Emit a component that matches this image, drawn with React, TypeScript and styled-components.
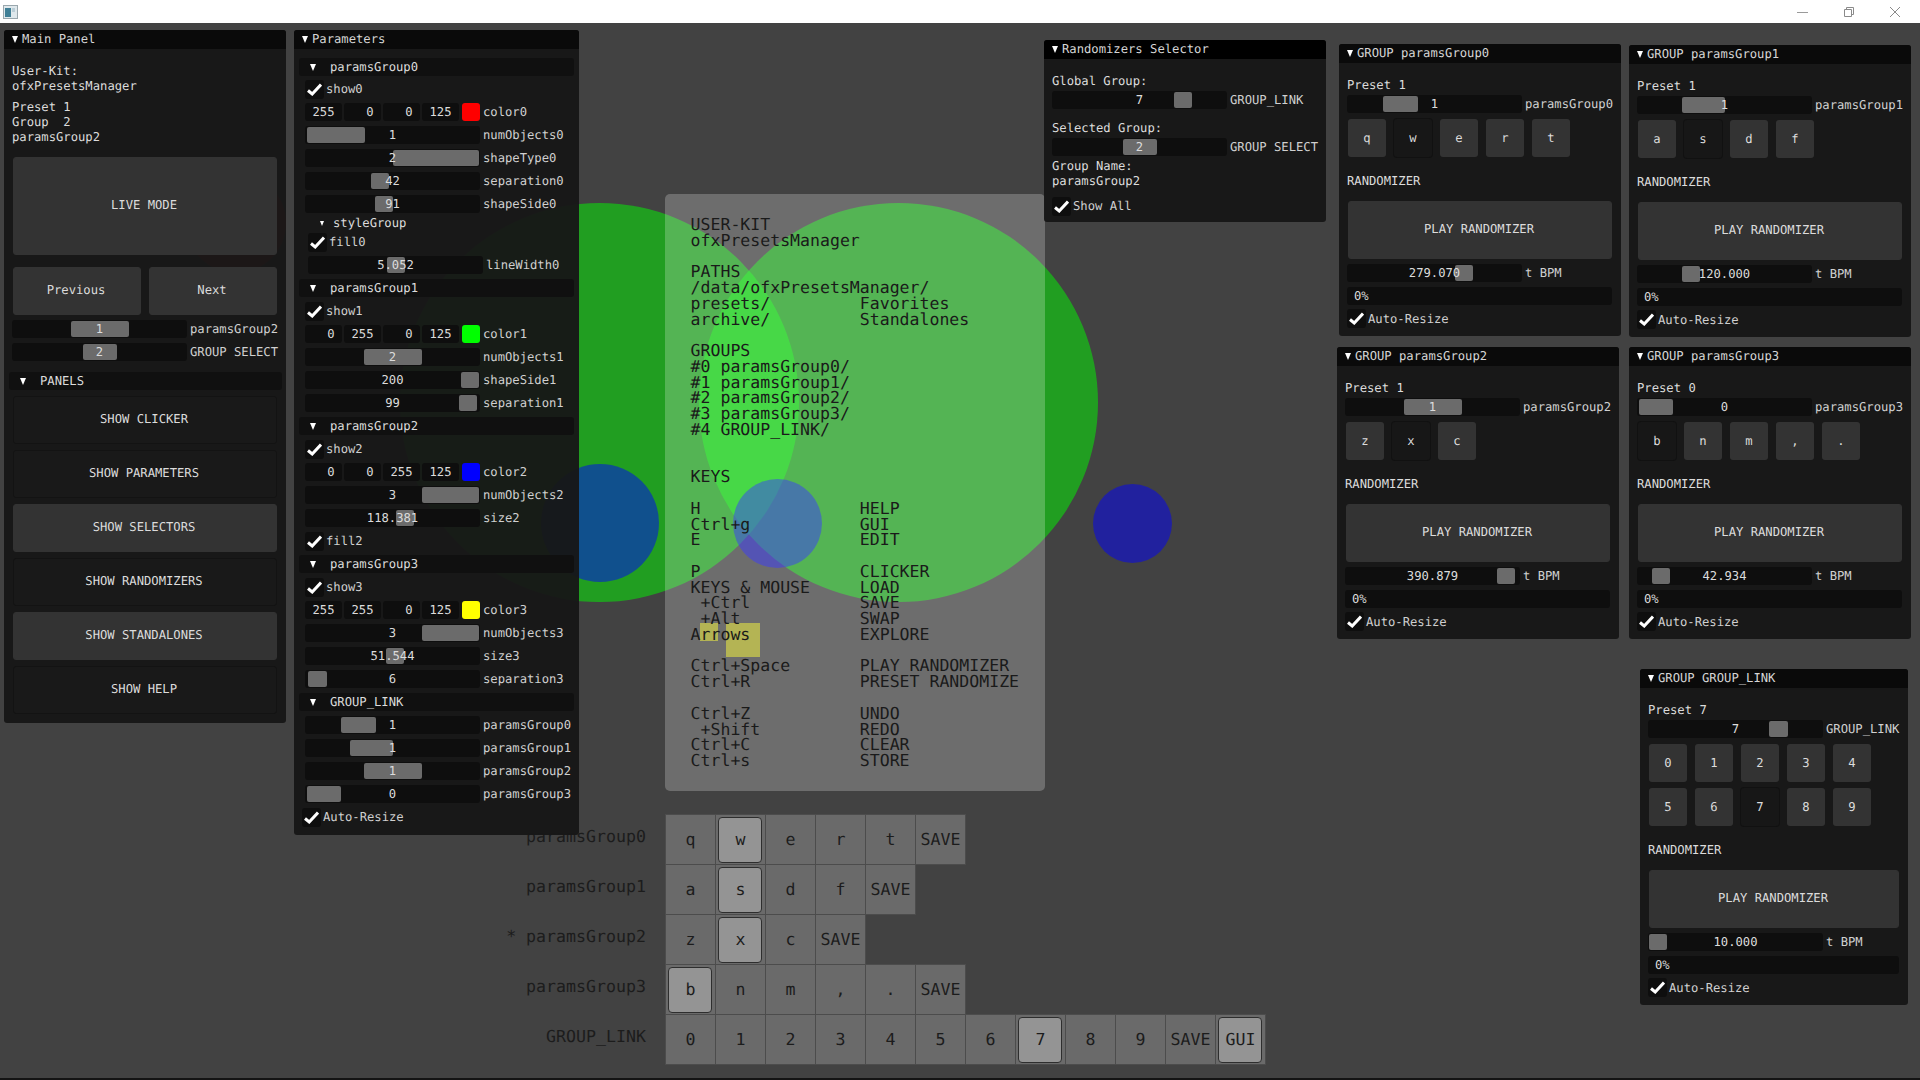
import React from 'react';
import styled, { createGlobalStyle } from 'styled-components';

const GlobalStyle = createGlobalStyle`
  html, body {
    margin: 0;
    padding: 0;
    background: #424242;
  }
  * {
    box-sizing: border-box;
  }
`;

const MONO = `"DejaVu Sans Mono", "Liberation Mono", monospace`;

/* ---------- frame ---------- */

const Frame = styled.div`
  position: relative;
  width: 1920px;
  height: 1080px;
  overflow: hidden;
  background: #424242;
  display: flex;
  flex-direction: column;
  font-family: ${MONO};
  font-size: 12.2px;
  color: #dcdcdc;
  text-rendering: geometricPrecision;
`;

const OsBar = styled.div`
  height: 23px;
  background: #ffffff;
  display: flex;
  align-items: center;
  justify-content: space-between;
  padding: 0 20px 0 3px;
`;

const OsControls = styled.div`
  display: flex;
  align-items: center;
  gap: 36px;
`;

const FrameFill = styled.div`
  flex: 1;
`;

const BottomEdge = styled.div`
  height: 2px;
  background: #141414;
`;

/* ---------- scene drawn behind the gui ---------- */

const Circle = styled.div<{ $x: number; $y: number; $d: number; $color: string }>`
  position: absolute;
  left: ${(p) => p.$x - p.$d / 2}px;
  top: ${(p) => p.$y - p.$d / 2}px;
  width: ${(p) => p.$d}px;
  height: ${(p) => p.$d}px;
  border-radius: 50%;
  background: ${(p) => p.$color};
`;

const Square = styled.div<{ $x: number; $y: number; $d: number }>`
  position: absolute;
  left: ${(p) => p.$x}px;
  top: ${(p) => p.$y}px;
  width: ${(p) => p.$d}px;
  height: ${(p) => p.$d}px;
  background: rgba(255, 255, 0, 0.49);
`;

const HelpPanel = styled.pre`
  position: absolute;
  left: 665px;
  top: 194px;
  width: 380px;
  height: 597px;
  margin: 0;
  padding: 23px 0 0 25.6px;
  border-radius: 5px;
  background: rgba(255, 255, 255, 0.233);
  font-family: ${MONO};
  font-size: 16.55px;
  line-height: 15.77px;
  color: #1a1a1a;
`;

/* ---------- clicker ---------- */

const Clicker = styled.div`
  position: absolute;
  left: 500px;
  top: 814px;
  display: flex;
  flex-direction: column;
`;

const ClickRow = styled.div`
  display: flex;
  align-items: center;
  height: 50px;
`;

const ClickLabel = styled.div`
  width: 146px;
  margin-right: 19px;
  padding-bottom: 5px;
  text-align: right;
  font-size: 16.6px;
  color: #1c1c1c;
  white-space: pre;
`;

const ClickKey = styled.div<{ $active?: boolean }>`
  position: relative;
  width: 51px;
  height: 51px;
  margin-right: -1px;
  flex: none;
  display: flex;
  align-items: center;
  justify-content: center;
  background: #6a6a6a;
  border: 1px solid #4c4c4c;
  font-size: 16.6px;
  color: #1c1c1c;

  &::before {
    content: '';
    display: ${(p) => (p.$active ? 'block' : 'none')};
    position: absolute;
    inset: 2px 3px 1px 2px;
    background: #949494;
    border: 1px solid #2e2e2e;
    border-radius: 4px;
  }
`;

const ClickKeyText = styled.span`
  position: relative;
`;

/* ---------- imgui-like windows ---------- */

const Win = styled.div<{ $x: number; $y: number; $w: number }>`
  position: absolute;
  left: ${(p) => p.$x}px;
  top: ${(p) => p.$y}px;
  width: ${(p) => p.$w}px;
  border-radius: 3px;
  background: rgba(23, 23, 23, 0.96);
  overflow: hidden;
`;

const TitleBar = styled.div<{ $dark?: boolean }>`
  height: 19px;
  padding: 0 0 1px 8px;
  display: flex;
  align-items: center;
  gap: 4px;
  background: ${(p) => (p.$dark ? '#000000' : '#0a0a0a')};
  color: #d6d6d6;
  white-space: pre;
`;

const Arrow = styled.span<{ $small?: boolean }>`
  flex: none;
  width: 0;
  height: 0;
  border-left: ${(p) => (p.$small ? 2.5 : 3.5)}px solid transparent;
  border-right: ${(p) => (p.$small ? 2.5 : 3.5)}px solid transparent;
  border-top: ${(p) => (p.$small ? 5 : 7)}px solid #ffffff;
`;

const Body = styled.div<{ $pad?: number; $bottom?: number }>`
  display: flex;
  flex-direction: column;
  padding: 0 ${(p) => p.$pad ?? 8}px ${(p) => p.$bottom ?? 9}px;
`;

const Line = styled.div<{ $mt?: number }>`
  height: 15px;
  line-height: 15px;
  margin-top: ${(p) => p.$mt ?? 0}px;
  white-space: pre;
`;

const SectionHeader = styled.div<{ $mt?: number }>`
  height: 18px;
  margin-top: ${(p) => p.$mt ?? 5}px;
  padding-left: 11px;
  display: flex;
  align-items: center;
  gap: 14px;
  border-radius: 3px;
  background: #101010;
`;

const PanelsHeader = styled(SectionHeader)`
  margin-left: -3px;
  margin-right: -4px;
  padding-left: 11px;
`;

const BigButton = styled.div<{ $h: number; $mt: number; $off?: boolean }>`
  height: ${(p) => p.$h}px;
  margin: ${(p) => p.$mt}px 1px 0;
  padding: 0 2px 2px 0;
  display: flex;
  align-items: center;
  justify-content: center;
  border-radius: 3px;
  background: ${(p) => (p.$off ? '#191919' : '#333333')};
  border: 1px solid ${(p) => (p.$off ? '#131313' : '#333333')};
`;

const SplitRow = styled.div`
  display: grid;
  grid-template-columns: 1fr 1fr;
  gap: 8px;
  margin: 12px 1px 0;
`;

const SplitButton = styled(BigButton)`
  margin: 0;
`;

const Row = styled.div<{ $mt?: number; $ml?: number }>`
  display: flex;
  align-items: center;
  gap: 3px;
  height: 18px;
  margin-top: ${(p) => p.$mt ?? 5}px;
  margin-left: ${(p) => p.$ml ?? 0}px;
  white-space: pre;
`;

const Track = styled.div`
  position: relative;
  flex: none;
  width: 175px;
  height: 18px;
  display: flex;
  align-items: center;
  justify-content: center;
  border-radius: 3px;
  background: #0e0e0e;
`;

const Grab = styled.div`
  position: absolute;
  top: 1px;
  bottom: 1px;
  border-radius: 2px;
  background: #6b6b6b;
`;

const TrackValue = styled.span`
  position: relative;
`;

const RowLabel = styled.span`
  color: #d0d0d0;
`;

const CheckRow = styled(Row)`
  gap: 2px;
`;

const CheckBox = styled.span`
  flex: none;
  width: 19px;
  height: 19px;
  display: flex;
  align-items: center;
  justify-content: center;
  border-radius: 3px;
  background: #0e0e0e;
`;

const Channel = styled.div`
  flex: none;
  width: 37px;
  height: 18px;
  display: flex;
  align-items: center;
  justify-content: center;
  border-radius: 3px;
  background: #0e0e0e;
`;

const ChannelGroup = styled.div`
  display: flex;
  gap: 2px;
`;

const Swatch = styled.span<{ $color: string }>`
  flex: none;
  width: 18px;
  height: 18px;
  border-radius: 3px;
  background: ${(p) => p.$color};
`;

const SubHeader = styled.div`
  height: 16px;
  margin: 2px 0 0 21px;
  display: flex;
  align-items: center;
  gap: 9px;
`;

const KeyGrid = styled.div`
  display: grid;
  grid-template-columns: repeat(5, 38px);
  gap: 6px 8px;
  margin: 6px 0 0 1px;
`;

const KeyButton = styled.div<{ $active?: boolean }>`
  height: 38px;
  display: flex;
  align-items: center;
  justify-content: center;
  border-radius: 3px;
  background: ${(p) => (p.$active ? '#171717' : '#333333')};
  box-shadow: ${(p) => (p.$active ? '0 0 0 1px #111111' : 'none')};
`;

const Progress = styled.div`
  height: 18px;
  margin: 5px 1px 0 0;
  padding-left: 7px;
  display: flex;
  align-items: center;
  border-radius: 3px;
  background: #0e0e0e;
`;

/* ---------- small widgets ---------- */

const Check = () => (
  <svg width="15" height="13" viewBox="0 0 15 13">
    <path d="M1 7.5 L5.2 11 L14 1.5" fill="none" stroke="#ffffff" strokeWidth="3" />
  </svg>
);

const CheckItem: React.FC<{ label: string; mt?: number; ml?: number }> = ({ label, mt, ml }) => (
  <CheckRow $mt={mt} $ml={ml}>
    <CheckBox>
      <Check />
    </CheckBox>
    <RowLabel>{label}</RowLabel>
  </CheckRow>
);

interface SliderProps {
  value: string;
  label: string;
  left: number;
  width: number;
  mt?: number;
  ml?: number;
}

const Slider: React.FC<SliderProps> = ({ value, label, left, width, mt, ml }) => (
  <Row $mt={mt} $ml={ml}>
    <Track>
      <Grab style={{ left, width }} />
      <TrackValue>{value}</TrackValue>
    </Track>
    <RowLabel>{label}</RowLabel>
  </Row>
);

const ColorRow: React.FC<{ values: string[]; color: string; label: string }> = ({ values, color, label }) => (
  <Row $ml={6}>
    <ChannelGroup>
      {values.map((v, i) => (
        // channel values are padded to three characters, like a %3d
        <Channel key={i}>{v.padStart(3, ' ')}</Channel>
      ))}
    </ChannelGroup>
    <Swatch $color={color} />
    <RowLabel>{label}</RowLabel>
  </Row>
);

const Header: React.FC<{ label: string; mt?: number }> = ({ label, mt }) => (
  <SectionHeader $mt={mt}>
    <Arrow />
    {label}
  </SectionHeader>
);

interface GroupWindowProps {
  x: number;
  y: number;
  w?: number;
  name: string;
  preset: string;
  grab: [number, number];
  keys: string[];
  active: number;
  bpm: string;
  bpmGrab: number;
}

const GroupWindow: React.FC<GroupWindowProps> = ({ x, y, w = 282, name, preset, grab, keys, active, bpm, bpmGrab }) => (
  <Win $x={x} $y={y} $w={w}>
    <TitleBar>
      <Arrow />
      GROUP {name}
    </TitleBar>
    <Body $bottom={8.5}>
      <Line $mt={14.5}>Preset {preset}</Line>
      <Slider value={preset} label={name} left={grab[0]} width={grab[1]} mt={2.5} />
      <KeyGrid>
        {keys.map((k, i) => (
          <KeyButton key={k} $active={i === active}>
            {k}
          </KeyButton>
        ))}
      </KeyGrid>
      <Line $mt={16.5}>RANDOMIZER</Line>
      <BigButton $h={58} $mt={12.5}>
        PLAY RANDOMIZER
      </BigButton>
      <Slider value={bpm} label="t BPM" left={bpmGrab} width={18} />
      <Progress>0%</Progress>
      <CheckItem label="Auto-Resize" mt={4.5} />
    </Body>
  </Win>
);

/* ---------- data ---------- */

const HELP_TEXT = `USER-KIT
ofxPresetsManager

PATHS
/data/ofxPresetsManager/
presets/         Favorites
archive/         Standalones

GROUPS
#0 paramsGroup0/
#1 paramsGroup1/
#2 paramsGroup2/
#3 paramsGroup3/
#4 GROUP_LINK/


KEYS

H                HELP
Ctrl+g           GUI
E                EDIT

P                CLICKER
KEYS & MOUSE     LOAD
 +Ctrl           SAVE
 +Alt            SWAP
Arrows           EXPLORE

Ctrl+Space       PLAY RANDOMIZER
Ctrl+R           PRESET RANDOMIZE

Ctrl+Z           UNDO
 +Shift          REDO
Ctrl+C           CLEAR
Ctrl+s           STORE`;

const clickerRows = [
  { label: 'paramsGroup0', keys: ['q', 'w', 'e', 'r', 't', 'SAVE'], active: 1 },
  { label: 'paramsGroup1', keys: ['a', 's', 'd', 'f', 'SAVE'], active: 1 },
  { label: '* paramsGroup2', keys: ['z', 'x', 'c', 'SAVE'], active: 1 },
  { label: 'paramsGroup3', keys: ['b', 'n', 'm', ',', '.', 'SAVE'], active: 0 },
  { label: 'GROUP_LINK', keys: ['0', '1', '2', '3', '4', '5', '6', '7', '8', '9', 'SAVE', 'GUI'], active: 7 },
];

const panelButtons = [
  { label: 'SHOW CLICKER', off: true },
  { label: 'SHOW PARAMETERS', off: true },
  { label: 'SHOW SELECTORS', off: false },
  { label: 'SHOW RANDOMIZERS', off: true },
  { label: 'SHOW STANDALONES', off: false },
  { label: 'SHOW HELP', off: true },
];

const DIGITS = ['0', '1', '2', '3', '4', '5', '6', '7', '8', '9'];

const App: React.FC = () => (
  <>
    <GlobalStyle />
    <Frame>
      <OsBar>
        <svg width="15" height="14" viewBox="0 0 15 14">
          <rect x="0.5" y="0.5" width="14" height="13" fill="#dfe8ec" stroke="#9aa7ad" />
          <rect x="2" y="3" width="6" height="9" fill="#3f7f96" />
          <rect x="9" y="3" width="3" height="4" fill="#b9cdd6" />
        </svg>
        <OsControls>
          <svg width="11" height="11" viewBox="0 0 11 11">
            <path d="M0 6.5 H11" stroke="#9a9a9a" fill="none" />
          </svg>
          <svg width="10" height="10" viewBox="0 0 10 10">
            <path d="M0.5 2.5 H7.5 V9.5 H0.5 Z M2.5 2.5 V0.5 H9.5 V7.5 H7.5" stroke="#8a8a8a" fill="none" />
          </svg>
          <svg width="10" height="10" viewBox="0 0 10 10">
            <path d="M0 0 L10 10 M10 0 L0 10" stroke="#8a8a8a" fill="none" />
          </svg>
        </OsControls>
      </OsBar>
      <FrameFill />
      <BottomEdge />

      <Circle $x={236} $y={223} $d={100} $color="rgba(255, 0, 0, 0.49)" />
      <Circle $x={599.5} $y={402.5} $d={399} $color="rgba(0, 255, 0, 0.49)" />
      <Circle $x={898} $y={402.5} $d={399} $color="rgba(0, 255, 0, 0.49)" />
      <Circle $x={600} $y={522.5} $d={118} $color="rgba(0, 0, 255, 0.49)" />
      <Circle $x={777} $y={523} $d={89} $color="rgba(0, 0, 255, 0.49)" />
      <Circle $x={1132.6} $y={523.3} $d={79} $color="rgba(0, 0, 255, 0.49)" />
      <Square $x={700} $y={623} $d={17.6} />
      <Square $x={726} $y={623} $d={34} />

      <HelpPanel>{HELP_TEXT}</HelpPanel>

      <Clicker>
        {clickerRows.map((row) => (
          <ClickRow key={row.label}>
            <ClickLabel>{row.label}</ClickLabel>
            {row.keys.map((k, i) => (
              <ClickKey key={k} $active={i === row.active || k === 'GUI'}>
                <ClickKeyText>{k}</ClickKeyText>
              </ClickKey>
            ))}
          </ClickRow>
        ))}
      </Clicker>

      <Win $x={4} $y={30} $w={282}>
        <TitleBar>
          <Arrow />
          Main Panel
        </TitleBar>
        <Body>
          <Line $mt={14.5}>User-Kit:</Line>
          <Line>ofxPresetsManager</Line>
          <Line $mt={6}>Preset 1</Line>
          <Line>Group  2</Line>
          <Line>paramsGroup2</Line>
          <BigButton $h={98} $mt={12.5}>
            LIVE MODE
          </BigButton>
          <SplitRow>
            <SplitButton $h={48} $mt={0}>
              Previous
            </SplitButton>
            <SplitButton $h={48} $mt={0}>
              Next
            </SplitButton>
          </SplitRow>
          <Slider value="1" label="paramsGroup2" left={59} width={58} />
          <Slider value="2" label="GROUP SELECT" left={71} width={34} />
          <PanelsHeader $mt={11}>
            <Arrow />
            PANELS
          </PanelsHeader>
          {panelButtons.map((b) => (
            <BigButton key={b.label} $h={48} $mt={6} $off={b.off}>
              {b.label}
            </BigButton>
          ))}
        </Body>
      </Win>

      <Win $x={294} $y={30} $w={285}>
        <TitleBar>
          <Arrow />
          Parameters
        </TitleBar>
        <Body $pad={5}>
          <Header label="paramsGroup0" mt={9} />
          <CheckItem label="show0" mt={4} ml={6} />
          <ColorRow values={['255', '0', '0', '125']} color="#ff0000" label="color0" />
          <Slider value="1" label="numObjects0" left={2} width={58} ml={6} />
          <Slider value="2" label="shapeType0" left={88} width={86} ml={6} />
          <Slider value="42" label="separation0" left={66} width={18} ml={6} />
          <Slider value="91" label="shapeSide0" left={70} width={18} ml={6} />
          <SubHeader>
            <Arrow $small />
            styleGroup
          </SubHeader>
          <CheckItem label="fill0" mt={2} ml={9} />
          <Slider value="5.052" label="lineWidth0" left={79} width={18} ml={9} />
          <Header label="paramsGroup1" />
          <CheckItem label="show1" ml={6} />
          <ColorRow values={['0', '255', '0', '125']} color="#00ff00" label="color1" />
          <Slider value="2" label="numObjects1" left={59} width={58} ml={6} />
          <Slider value="200" label="shapeSide1" left={156} width={18} ml={6} />
          <Slider value="99" label="separation1" left={154} width={18} ml={6} />
          <Header label="paramsGroup2" />
          <CheckItem label="show2" ml={6} />
          <ColorRow values={['0', '0', '255', '125']} color="#0000ff" label="color2" />
          <Slider value="3" label="numObjects2" left={117} width={57} ml={6} />
          <Slider value="118.381" label="size2" left={91} width={18} ml={6} />
          <CheckItem label="fill2" ml={6} />
          <Header label="paramsGroup3" />
          <CheckItem label="show3" ml={6} />
          <ColorRow values={['255', '255', '0', '125']} color="#ffff00" label="color3" />
          <Slider value="3" label="numObjects3" left={117} width={57} ml={6} />
          <Slider value="51.544" label="size3" left={81} width={18} ml={6} />
          <Slider value="6" label="separation3" left={3} width={19} ml={6} />
          <Header label="GROUP_LINK" />
          <Slider value="1" label="paramsGroup0" left={36} width={35} ml={6} />
          <Slider value="1" label="paramsGroup1" left={45} width={43} ml={6} />
          <Slider value="1" label="paramsGroup2" left={59} width={58} ml={6} />
          <Slider value="0" label="paramsGroup3" left={2} width={34} ml={6} />
          <CheckItem label="Auto-Resize" ml={3} />
        </Body>
      </Win>

      <Win $x={1044} $y={40} $w={282}>
        <TitleBar $dark>
          <Arrow />
          Randomizers Selector
        </TitleBar>
        <Body $bottom={7}>
          <Line $mt={14.5}>Global Group:</Line>
          <Slider value="7" label="GROUP_LINK" left={122} width={18} mt={2.5} />
          <Line $mt={11.5}>Selected Group:</Line>
          <Slider value="2" label="GROUP SELECT" left={71} width={34} mt={2.5} />
          <Line $mt={2.5}>Group Name:</Line>
          <Line>paramsGroup2</Line>
          <CheckItem label="Show All" mt={8.5} />
        </Body>
      </Win>

      <GroupWindow x={1339} y={44} name="paramsGroup0" preset="1" grab={[36, 35]} keys={['q', 'w', 'e', 'r', 't']} active={1} bpm="279.070" bpmGrab={108} />
      <GroupWindow x={1629} y={45} name="paramsGroup1" preset="1" grab={[45, 43]} keys={['a', 's', 'd', 'f']} active={1} bpm="120.000" bpmGrab={45} />
      <GroupWindow x={1337} y={347} name="paramsGroup2" preset="1" grab={[59, 58]} keys={['z', 'x', 'c']} active={1} bpm="390.879" bpmGrab={152} />
      <GroupWindow x={1629} y={347} name="paramsGroup3" preset="0" grab={[2, 34]} keys={['b', 'n', 'm', ',', '.']} active={0} bpm="42.934" bpmGrab={15} />
      <GroupWindow x={1640} y={669} w={268} name="GROUP_LINK" preset="7" grab={[121, 19]} keys={DIGITS} active={7} bpm="10.000" bpmGrab={1} />
    </Frame>
  </>
);

export default App;
